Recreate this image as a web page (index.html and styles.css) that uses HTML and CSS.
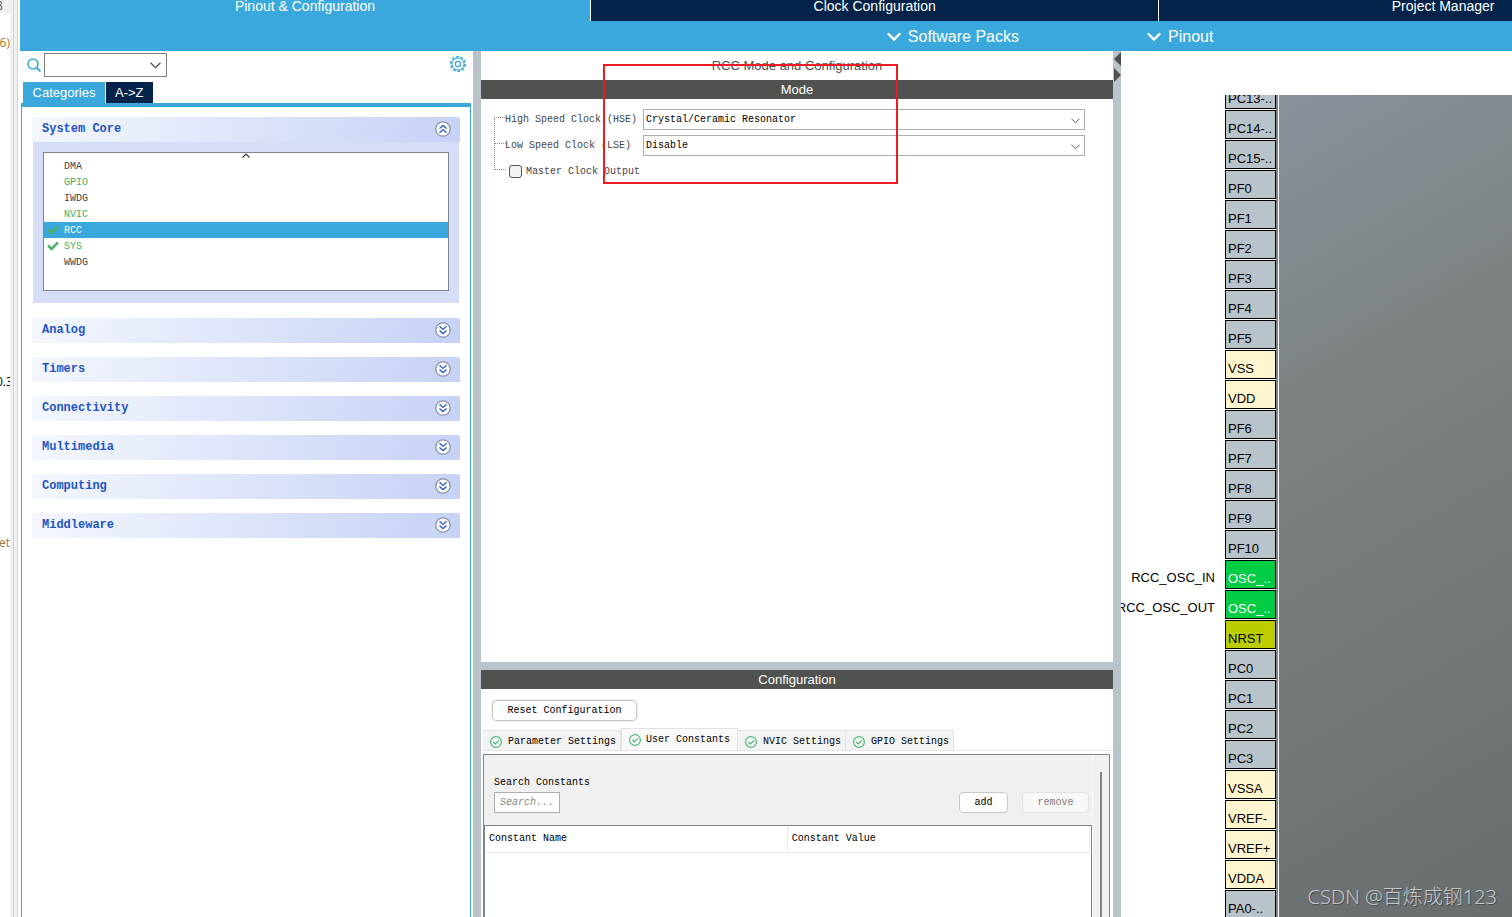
FILE: index.html
```html
<!DOCTYPE html>
<html lang="en">
<head>
<meta charset="utf-8">
<title>Pinout &amp; Configuration</title>
<link rel="stylesheet" href="styles.css">
</head>
<body>
<svg class="defs" aria-hidden="true">
  <symbol id="down" viewBox="0 0 10 6"><path d="M0.5 0.5L5 5L9.5 0.5" fill="none" stroke="currentColor" stroke-width="1"/></symbol>
  <symbol id="bold-down" viewBox="0 0 14 10"><path d="M1.5 2L7 7.500L12.500 2" fill="none" stroke="currentColor" stroke-width="2.400" stroke-linecap="round"/></symbol>
  <symbol id="fold-down" viewBox="0 0 16 16"><circle cx="8" cy="8" r="7.200" fill="#fff" stroke="#8a90a8" stroke-width="1.300"/><path d="M4.500 4.200L8 7.400L11.500 4.200M4.500 8.400L8 11.600L11.500 8.400" fill="none" stroke="#2a5bd0" stroke-width="1.300"/></symbol>
  <symbol id="fold-up" viewBox="0 0 16 16"><circle cx="8" cy="8" r="7.200" fill="#fff" stroke="#8a90a8" stroke-width="1.300"/><path d="M4.500 7.600L8 4.400L11.500 7.600M4.500 11.800L8 8.600L11.500 11.800" fill="none" stroke="#2a5bd0" stroke-width="1.300"/></symbol>
  <symbol id="tick" viewBox="0 0 12 10"><path d="M1 4.500L4.600 8L11 1.300" fill="none" stroke="#4caf6e" stroke-width="2.600"/></symbol>
  <symbol id="ok" viewBox="0 0 12 12"><circle cx="6" cy="6" r="5.400" fill="none" stroke="#4db87a" stroke-width="1.200"/><path d="M3.200 6L5.400 8L9 4.400" fill="none" stroke="#4db87a" stroke-width="1.200"/></symbol>
</svg>
<div class="window">
  <aside class="editor">
    <div class="editor-text">
      <span class="frag frag-head">8</span>
      <span class="frag frag-a">6)</span>
      <span class="frag frag-b">0.3</span>
      <span class="frag frag-c">et</span>
    </div>
    <div class="sash"></div>
  </aside>
  <div class="app">
    <nav class="main-tabs">
      <button class="main-tab active">Pinout &amp; Configuration</button>
      <button class="main-tab">Clock Configuration</button>
      <button class="main-tab">Project Manager</button>
    </nav>
    <div class="menu-bar">
      <button class="menu"><svg><use href="#bold-down"/></svg>Software Packs</button>
      <button class="menu"><svg><use href="#bold-down"/></svg>Pinout</button>
    </div>
    <main class="work">
      <section class="categories">
        <div class="search-row">
          <svg class="lens" viewBox="0 0 14 14"><circle cx="6" cy="6" r="5" fill="none" stroke="#3aa8dc" stroke-width="1.600"/><path d="M9.500 9.500L13.500 13.500" stroke="#3aa8dc" stroke-width="1.900"/></svg>
          <div class="combo combo-search"><select aria-label="Search peripherals"><option></option></select><svg><use href="#down"/></svg></div>
          <button class="gear" aria-label="Settings"><svg viewBox="0 0 16 16" fill="none" stroke="#3aa8dc"><circle cx="8" cy="8" r="7.200" stroke-width="1.600" stroke-dasharray="2.900 1.624"/><circle cx="8" cy="8" r="6" stroke-width="1"/><circle cx="8" cy="8" r="2.600" stroke-width="1.200"/></svg></button>
        </div>
        <div class="view-tabs"><button class="view-tab active">Categories</button><button class="view-tab">A-&gt;Z</button></div>
        <div class="groups">
          <div class="group open">
            <button class="fold">System Core<svg><use href="#fold-up"/></svg></button>
            <div class="group-body">
              <div class="list-box">
                <svg class="scroll-up" viewBox="0 0 8 5"><path d="M0.500 4.500L4 1L7.500 4.500" fill="none" stroke="#333" stroke-width="1.100"/></svg>
                <ul class="periphs">
                  <li>DMA</li>
                  <li class="on">GPIO</li>
                  <li>IWDG</li>
                  <li class="on">NVIC</li>
                  <li class="selected"><svg><use href="#tick"/></svg>RCC</li>
                  <li class="on"><svg><use href="#tick"/></svg>SYS</li>
                  <li>WWDG</li>
                </ul>
              </div>
            </div>
          </div>
          <button class="fold">Analog<svg><use href="#fold-down"/></svg></button>
          <button class="fold">Timers<svg><use href="#fold-down"/></svg></button>
          <button class="fold">Connectivity<svg><use href="#fold-down"/></svg></button>
          <button class="fold">Multimedia<svg><use href="#fold-down"/></svg></button>
          <button class="fold">Computing<svg><use href="#fold-down"/></svg></button>
          <button class="fold">Middleware<svg><use href="#fold-down"/></svg></button>
        </div>
      </section>
      <div class="divider"></div>
      <section class="settings">
        <div class="mode">
          <h1 class="title">RCC Mode and Configuration</h1>
          <h2 class="bar">Mode</h2>
          <form class="tree">
            <div class="branch"><label for="hse">High Speed Clock (HSE)</label><div class="combo"><select id="hse"><option>Crystal/Ceramic Resonator</option></select><svg><use href="#down"/></svg></div></div>
            <div class="branch"><label for="lse">Low Speed Clock (LSE)</label><div class="combo"><select id="lse"><option>Disable</option></select><svg><use href="#down"/></svg></div></div>
            <div class="branch last"><input type="checkbox" id="mco"><label for="mco">Master Clock Output</label></div>
          </form>
          <div class="highlight"></div>
        </div>
        <div class="divider"></div>
        <div class="config">
          <h2 class="bar">Configuration</h2>
          <button class="btn reset">Reset Configuration</button>
          <div class="cfg-tabs">
            <button class="cfg-tab"><svg><use href="#ok"/></svg>Parameter Settings</button>
            <button class="cfg-tab active"><svg><use href="#ok"/></svg>User Constants</button>
            <button class="cfg-tab"><svg><use href="#ok"/></svg>NVIC Settings</button>
            <button class="cfg-tab"><svg><use href="#ok"/></svg>GPIO Settings</button>
          </div>
          <div class="pane">
            <div class="pane-main">
              <div class="tools">
                <div class="find"><label for="find">Search Constants</label><input id="find" type="text" placeholder="Search..."></div>
                <button class="btn add">add</button>
                <button class="btn remove" disabled>remove</button>
              </div>
              <div class="table-box">
                <table><thead><tr><th>Constant Name</th><th>Constant Value</th></tr></thead></table>
              </div>
            </div>
            <div class="scroll"><div class="thumb"></div></div>
          </div>
        </div>
      </section>
      <div class="divider arrows">
        <svg viewBox="0 0 8 32"><path d="M8 1V15L1 8ZM1 17V31L8 24Z" fill="#505050"/></svg>
      </div>
      <section class="chip-view">
        <div class="chip">
          <div class="pins">
            <div class="row"><span class="pin">PC13-..</span></div>
            <div class="row"><span class="pin">PC14-..</span></div>
            <div class="row"><span class="pin">PC15-..</span></div>
            <div class="row"><span class="pin">PF0</span></div>
            <div class="row"><span class="pin">PF1</span></div>
            <div class="row"><span class="pin">PF2</span></div>
            <div class="row"><span class="pin">PF3</span></div>
            <div class="row"><span class="pin">PF4</span></div>
            <div class="row"><span class="pin">PF5</span></div>
            <div class="row"><span class="pin power">VSS</span></div>
            <div class="row"><span class="pin power">VDD</span></div>
            <div class="row"><span class="pin">PF6</span></div>
            <div class="row"><span class="pin">PF7</span></div>
            <div class="row"><span class="pin">PF8</span></div>
            <div class="row"><span class="pin">PF9</span></div>
            <div class="row"><span class="pin">PF10</span></div>
            <div class="row"><span class="signal">RCC_OSC_IN</span><span class="pin used">OSC_..</span></div>
            <div class="row"><span class="signal">RCC_OSC_OUT</span><span class="pin used">OSC_..</span></div>
            <div class="row"><span class="pin reset-pin">NRST</span></div>
            <div class="row"><span class="pin">PC0</span></div>
            <div class="row"><span class="pin">PC1</span></div>
            <div class="row"><span class="pin">PC2</span></div>
            <div class="row"><span class="pin">PC3</span></div>
            <div class="row"><span class="pin power">VSSA</span></div>
            <div class="row"><span class="pin power">VREF-</span></div>
            <div class="row"><span class="pin power">VREF+</span></div>
            <div class="row"><span class="pin power">VDDA</span></div>
            <div class="row"><span class="pin">PA0-..</span></div>
          </div>
          <div class="die"></div>
        </div>
        <div class="watermark">CSDN @百炼成钢123</div>
      </section>
    </main>
  </div>
</div>
</body>
</html>
```
FILE: styles.css
```css
* { box-sizing: border-box; }
body {
  margin: 0;
  font: 13px/16px "Liberation Sans", Arial, sans-serif;
  color: #000;
  background: #fff;
}
button, select, input { font: inherit; color: inherit; margin: 0; padding: 0; border: 0; border-radius: 0; background: none; }
h1, h2, ul { margin: 0; padding: 0; font-weight: normal; list-style: none; }
svg { display: block; flex: none; }
.defs { position: absolute; width: 0; height: 0; }

.window { display: flex; height: 100vh; overflow: hidden; }

/* editor edge */
.editor { display: flex; flex: 0 0 20px; }
.editor-text { width: 10px; overflow: hidden; display: flex; flex-direction: column; align-items: flex-end; font-family: "Open Sans", sans-serif; font-size: 12px; }
.frag { display: block; line-height: 16px; flex: none; }
.frag-head { width: 10px; height: 13px; line-height: 12px; background: #f0f0f0; text-indent: -4px; color: #555; }
.frag-a { margin-top: 22px; color: #a07830; }
.frag-b { margin-top: 323px; align-self: flex-start; text-indent: -4px; }
.frag-c { margin-top: 145px; color: #a07830; }
.sash { flex: 0 0 8px; background: #f0f0f0; border-right: 1px solid #d4d4d4; display: flex; }
.sash::before { content: ""; width: 3px; border-right: 1px solid #d4d4d4; }

.app { flex: 1; min-width: 0; display: flex; flex-direction: column; }

/* top tabs */
.main-tabs { display: flex; flex: 0 0 21px; overflow: hidden; background: #03234b; }
.main-tab { flex: 0 0 38.1%; height: 21px; padding-bottom: 9px; font-size: 14px; line-height: 12px; color: #fff; background: #03234b; border-left: 1px solid #fff; }
.main-tab.active { flex-basis: 38.2%; background: #3aa8dc; border-left: 0; }
.menu-bar { display: flex; flex: 0 0 30px; gap: 128px; padding-left: 58.1%; background: #3aa8dc; color: #fff; }
.menu { display: flex; align-items: center; gap: 7px; padding-top: 1px; font-size: 16px; white-space: nowrap; }
.menu svg { width: 14px; height: 10px; }

.work { flex: 1; min-height: 0; display: grid; grid-template-columns: 453fr 8px 632fr 8px 391fr; }
.divider { background: #b8c4ca; }

/* category browser */
.categories { display: flex; flex-direction: column; min-width: 0; padding: 2px 2px 0 1px; }
.search-row { display: flex; align-items: center; gap: 3px; padding: 0 5px 0 6px; }
.lens { width: 14px; height: 14px; }
.combo { position: relative; }
.combo select { display: block; width: 100%; height: 21px; appearance: none; border: 1px solid #abadb3; background: #fff; padding: 0 2px; font: 10px/16px "Liberation Mono", monospace; }
.combo svg { position: absolute; right: 5px; top: 9px; width: 9px; height: 6px; color: #444; pointer-events: none; }
.combo-search { width: 123px; }
.combo-search select { height: 24px; border-color: #7a8288; }
.combo-search svg { right: 6px; top: 9px; width: 11px; height: 7px; }
.gear { margin-left: auto; padding-bottom: 2px; }
.gear svg { width: 16px; height: 16px; }
.view-tabs { display: flex; gap: 1px; padding: 5px 2px 0; }
.view-tab { height: 21px; padding: 0 9px; background: #03234b; color: #fff; }
.view-tab.active { width: 82px; background: #3aa8dc; }
.groups { flex: 1; display: flex; flex-direction: column; gap: 14px; padding: 10px; border: 1px solid #3aa8dc; border-width: 4px 1px 0; }
.fold { display: flex; align-items: center; justify-content: space-between; flex: none; width: 100%; height: 25px; padding: 0 9px 1px 10px; border-radius: 3px 2px 0 0; background: linear-gradient(100deg, #f4f7fe, #c6d2f6); color: #1f55c4; font: bold 12px/16px "Liberation Mono", monospace; }
.fold svg { width: 16px; height: 16px; }
.group-body { margin: 0 1px 1px; padding: 10px 10px 12px; background: #d6ddf7; }
.list-box { position: relative; height: 139px; padding-top: 5px; border: 1px solid #7f8491; background: #fff; }
.periphs { font: 10px/18px "Liberation Mono", monospace; color: #444; }
.periphs li { position: relative; height: 16px; padding-left: 20px; }
.periphs li svg { position: absolute; left: 3px; top: 3px; width: 12px; height: 10px; }
.periphs .on { color: #3cb065; }
.periphs .selected { background: #3aa8dc; color: #fff; }
.scroll-up { position: absolute; left: 49%; top: 0; width: 8px; height: 5px; }

/* mode and configuration */
.settings { display: grid; grid-template-rows: minmax(0, 1fr) 8px 247px; min-width: 0; }
.mode { position: relative; }
.title { height: 29px; font-size: 13px; line-height: 29px; text-align: center; color: #505250; }
.bar { height: 19px; font-size: 13px; line-height: 19px; text-align: center; color: #fff; background: #505250; }
.tree { display: flex; flex-direction: column; gap: 5px; margin: 10px 28px 0 13px; font: 10px/21px "Liberation Mono", monospace; color: #444; }
.branch { position: relative; display: flex; align-items: center; height: 21px; padding-left: 11px; }
.branch::before { content: ""; position: absolute; left: 0; bottom: 12px; width: 11px; height: 26px; border: dotted #888; border-width: 0 0 1px 1px; }
.branch:first-child::before { height: 1px; border-left: 0; }
.branch label { flex: 0 0 138px; }
.branch .combo { flex: 1; color: #000; }
.last label { flex: none; }
.last input { appearance: none; width: 13px; height: 13px; margin: 0 4px; border: 1px solid #555; border-radius: 3px; background: #f3f3f3; }
.highlight { position: absolute; left: 122px; top: 13px; width: 295px; height: 120px; border: 2px solid #ed1c24; pointer-events: none; }

.config { display: flex; flex-direction: column; min-width: 0; overflow: hidden; font: 10px/16px "Liberation Mono", monospace; }
.config .bar { flex: none; font: 13px/19px "Liberation Sans", Arial, sans-serif; }
.btn { flex: none; height: 21px; border: 1px solid #c8c8c8; border-radius: 4px; background: #fdfdfd; }
.reset { align-self: flex-start; width: 145px; margin: 11px 11px 7px; outline: 1px solid #f0f0f0; }
.cfg-tabs { display: flex; align-items: flex-end; flex: none; height: 23px; margin-left: 2px; border-bottom: 1px solid #e4e4e4; }
.cfg-tab { display: flex; align-items: center; gap: 6px; height: 20px; padding: 2px 4px 0 7px; border: 1px solid #e2e2e2; border-width: 1px 1px 0 0; background: #f3f3f3; white-space: nowrap; }
.cfg-tab.active { height: 22px; padding: 0 7px 0 7px; border-left-width: 1px; background: #fafafa; gap: 5px; }
.cfg-tab svg { width: 12px; height: 12px; }
.pane { flex: 1; display: flex; min-height: 0; margin: 3px 3px 0 2px; border: 1px solid #7f8491; border-bottom: 0; background: #f0f0f0; }
.pane-main { flex: 1; display: flex; flex-direction: column; min-width: 0; }
.tools { display: flex; align-items: flex-end; padding: 20px 3px 12px 10px; }
.find { display: flex; flex-direction: column; margin-right: auto; gap: 1px; }
.find input { width: 66px; height: 21px; padding: 0 5px; border: 1px solid #abadb3; background: #fff; }
.find input::placeholder { color: #888; opacity: 1; font-style: italic; }
.add { width: 49px; margin-right: 14px; }
.remove { width: 67px; border-color: #e4e4e4; color: #808080; background: #f8f8f8; }
.table-box { flex: 1; padding-right: 1px; border: 1px solid #7f8491; border-bottom: 0; background: #fff; }
table { width: 100%; border-collapse: collapse; table-layout: fixed; }
th { height: 26px; padding: 0 4px; text-align: left; font-weight: normal; border: 1px solid #ebebeb; border-top: 0; }
th:first-child { border-left: 0; }
.scroll { flex: 0 0 17px; display: flex; justify-content: center; padding-top: 17px; border-left: 1px solid #fff; }
.thumb { width: 2px; background: #858585; }

.arrows svg { width: 8px; height: 32px; }

/* chip */
.chip-view { position: relative; min-width: 0; padding-top: 44px; overflow: hidden; }
.chip { display: flex; height: 100%; overflow: hidden; }
.pins { display: flex; flex-direction: column; flex: 0 0 155px; gap: 1px; margin-top: -15px; }
.row { display: flex; flex: none; height: 29px; padding-left: 104px; line-height: 36px; }
.row:has(.signal) { padding-left: 0; }
.signal { flex: 0 0 104px; display: flex; justify-content: flex-end; padding-right: 10px; overflow: hidden; }
.pin { flex: 0 0 51px; padding-left: 2px; border: 1px solid #000; line-height: 36px; overflow: hidden; background: #b8c4ca; white-space: nowrap; }
.power { background: #fff5ce; }
.used { background: #00cc44; color: #fff; }
.reset-pin { background: #bbcc00; }
.die { flex: 1; border-left: 1px solid #fff; outline: 2px solid #7e868b; margin-left: 2px; background: linear-gradient(150deg, #899199, #7c8283 35%, #686d6f); }
.watermark { position: absolute; right: 15px; bottom: 5px; font: 300 20px/30px "Noto Sans", "Noto Sans CJK SC", sans-serif; color: #c3c7c9; text-shadow: 1px 1px 1px #44484a; white-space: nowrap; }
```
